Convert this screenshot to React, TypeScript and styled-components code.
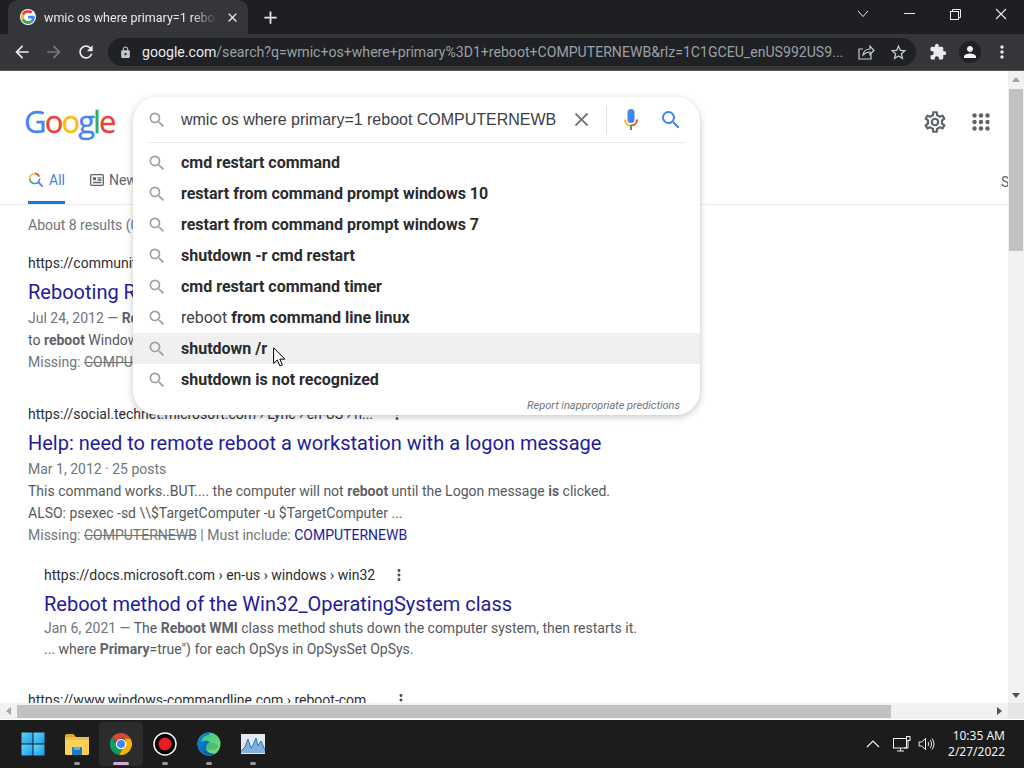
import React from "react";
import styled, { createGlobalStyle } from "styled-components";
import {
  MdArrowBack,
  MdArrowForward,
  MdRefresh,
  MdLock,
  MdStarBorder,
  MdExtension,
  MdPerson,
  MdMoreVert,
  MdSearch,
  MdClose,
  MdAdd,
  MdOutlineSettings,
} from "react-icons/md";

const GlobalStyle = createGlobalStyle`
  html, body { margin: 0; padding: 0; height: 100%; overflow: hidden; background: #fff; }
  #root { width: 1024px; height: 768px; }
  * { box-sizing: border-box; }
`;

const Screen = styled.div`
  width: 1024px;
  height: 768px;
  display: flex;
  flex-direction: column;
  font-family: Roboto, "Liberation Sans", Arial, sans-serif;
  overflow: hidden;
`;

/* browser chrome */
const TitleBar = styled.div`
  height: 34px;
  flex: none;
  background: #1e1f22;
  display: flex;
  align-items: flex-end;
  padding-left: 8px;
`;

const Tab = styled.div`
  width: 240px;
  height: 34px;
  background: #35363a;
  border-radius: 10px 10px 0 0;
  display: flex;
  align-items: center;
  padding: 0 8px 0 12px;
  gap: 8px;
  color: #e8eaed;
  font-size: 12.5px;
`;

const FaviconWrap = styled.div`
  width: 16px;
  height: 16px;
  border-radius: 50%;
  background: #fff;
  display: flex;
  align-items: center;
  justify-content: center;
  flex: none;
`;

const TabTitle = styled.div`
  flex: 1;
  white-space: nowrap;
  overflow: hidden;
  -webkit-mask-image: linear-gradient(to right, #000 85%, transparent 100%);
  mask-image: linear-gradient(to right, #000 85%, transparent 100%);
`;

const NewTab = styled.div`
  width: 44px;
  height: 34px;
  display: flex;
  align-items: center;
  justify-content: center;
  color: #e8eaed;
  font-size: 21px;
`;

const TitleSpacer = styled.div`
  flex: 1;
`;

const WindowButton = styled.div`
  width: 46px;
  height: 34px;
  display: flex;
  align-items: center;
  justify-content: center;
  padding-bottom: 6px;
  color: #e8eaed;
`;

const ToolBar = styled.div`
  height: 37px;
  flex: none;
  background: #35363a;
  border-bottom: 1px solid #55565a;
  display: flex;
  align-items: center;
  padding: 0 0 0 6px;
  color: #e8eaed;
`;

const NavButton = styled.div<{ $dim?: boolean }>`
  width: 32px;
  height: 32px;
  display: flex;
  align-items: center;
  justify-content: center;
  font-size: 20px;
  color: ${({ $dim }) => ($dim ? "#77787b" : "#e8eaed")};
`;

const Omnibox = styled.div`
  width: 808px;
  height: 28px;
  margin: 0 6px;
  border-radius: 14px;
  background: #202124;
  display: flex;
  align-items: center;
  padding: 0 2px 0 11px;
  font-size: 14.1px;
  color: #9aa0a6;
`;

const UrlText = styled.div`
  flex: 1;
  margin-left: 10px;
  white-space: nowrap;
  overflow: hidden;
`;

const UrlHost = styled.span`
  color: #e8eaed;
`;

const OmniIcon = styled.div`
  width: 32px;
  flex: none;
  display: flex;
  align-items: center;
  justify-content: center;
  font-size: 18px;
  color: #c8cbcf;
`;

const ProfileBadge = styled.div`
  width: 22px;
  height: 22px;
  border-radius: 50%;
  background: #202124;
  display: flex;
  align-items: center;
  justify-content: center;
  font-size: 18px;
  color: #f1f3f4;
`;

/* page */
const Frame = styled.div`
  flex: 1;
  min-height: 0;
  display: grid;
  grid-template-columns: 1fr 16px;
  grid-template-rows: 1fr 16px;
  background: #fff;
`;

const Viewport = styled.div`
  position: relative;
  overflow: hidden;
  background: #fff;
`;

const Header = styled.div`
  height: 134px;
  border-bottom: 1px solid #ebebeb;
  display: flex;
  flex-direction: column;
  padding-left: 24px;
`;

const HeaderTop = styled.div`
  height: 92px;
  display: flex;
  align-items: center;
  padding-top: 10px;
`;

const Logo = styled.div`
  font-family: "Open Sans", Roboto, sans-serif;
  font-size: 31px;
  letter-spacing: -1.9px;
  font-weight: 500;
  width: 96px;
  line-height: 1;
  -webkit-text-stroke: 0.3px currentColor;
  padding-bottom: 2px;
`;

const LogoLetter = styled.span<{ $c: string }>`
  color: ${({ $c }) => $c};
`;

const HeaderActions = styled.div`
  margin-left: auto;
  margin-right: 14px;
  display: flex;
  align-items: center;
  gap: 20px;
  color: #5f6368;
  font-size: 26px;
`;

const HeaderIcon = styled.div`
  width: 26px;
  height: 26px;
  display: flex;
  align-items: center;
  justify-content: center;
`;

const Tabs = styled.div`
  flex: 1;
  display: flex;
  padding-left: 4px;
  position: relative;
`;

const SearchTab = styled.div<{ $active?: boolean }>`
  height: 100%;
  margin-right: 25px;
  display: flex;
  align-items: center;
  gap: 5px;
  font-size: 14px;
  padding-bottom: 4px;
  color: ${({ $active }) => ($active ? "#4a80e0" : "#5f6368")};
  border-bottom: 3px solid ${({ $active }) => ($active ? "#1a73e8" : "transparent")};
`;

const ClippedTab = styled.div`
  margin-left: auto;
  margin-right: -1px;
  width: 8px;
  overflow: hidden;
  display: flex;
  align-items: center;
  font-size: 14px;
  padding-bottom: 4px;
  color: #5f6368;
`;

const Results = styled.div`
  padding-left: 28px;
`;

const AboutLine = styled.div`
  height: 22px;
  margin-top: 9px;
  margin-bottom: 16px;
  line-height: 22px;
  font-size: 14px;
  color: #70757a;
`;

const Result = styled.div<{ $indent?: boolean; $gap?: number }>`
  margin-left: ${({ $indent }) => ($indent ? 16 : 0)}px;
  margin-bottom: ${({ $gap }) => $gap ?? 30}px;
`;

const UrlRow = styled.div`
  height: 22px;
  display: flex;
  align-items: center;
  font-size: 14px;
  color: #2b2d30;
  white-space: nowrap;
`;

const Kebab = styled.div`
  margin-left: 15px;
  display: flex;
  font-size: 18px;
  color: #4d5156;
`;

const ResultTitle = styled.div<{ $tight?: boolean }>`
  height: ${({ $tight }) => ($tight ? 29 : 30)}px;
  margin-top: 3px;
  line-height: 30px;
  font-size: 20px;
  color: #231a9c;
  white-space: nowrap;
`;

const Snippet = styled.div<{ $tight?: boolean }>`
  height: ${({ $tight }) => ($tight ? 21 : 22)}px;
  line-height: ${({ $tight }) => ($tight ? 21 : 22)}px;
  font-size: 14px;
  color: #55595e;
  white-space: nowrap;
`;

const DateText = styled.span`
  color: #70757a;
`;

const Em = styled.b`
  font-weight: 700;
  color: #5f6368;
`;

const Struck = styled.s`
  color: #70757a;
`;

const Linked = styled.span`
  color: #231a9c;
`;

/* suggestions overlay */
const Suggest = styled.div`
  position: absolute;
  left: 133px;
  top: 26px;
  width: 567px;
  height: 318px;
  background: #fff;
  border-radius: 24px;
  box-shadow: 0 2px 7px rgba(60, 64, 67, 0.3);
  overflow: hidden;
  display: flex;
  flex-direction: column;
`;

const InputRow = styled.div`
  height: 46px;
  margin: 0 14px;
  flex: none;
  border-bottom: 1px solid #e8eaed;
  display: flex;
  align-items: center;
  font-size: 16px;
  color: #3c4043;
`;

const SearchGlyph = styled.div`
  width: 34px;
  flex: none;
  display: flex;
  font-size: 20px;
  color: #9aa0a6;
`;

const InputText = styled.div`
  flex: 1;
  white-space: nowrap;
  font-family: "Liberation Sans", Arial, sans-serif;
  letter-spacing: -0.01px;
`;

const ClearIcon = styled.div`
  display: flex;
  font-size: 23px;
  color: #70757a;
  padding-right: 13px;
  border-right: 1px solid #dfe1e5;
  height: 28px;
  align-items: center;
`;

const MicWrap = styled.div`
  display: flex;
  margin: 0 20px 0 16px;
`;

const BlueSearch = styled.div`
  display: flex;
  font-size: 24px;
  color: #4285f4;
  margin-right: 3px;
`;

const SuggestList = styled.div`
  margin-top: 4px;
  display: flex;
  flex-direction: column;
`;

const SuggestRow = styled.div<{ $hover?: boolean }>`
  height: 31px;
  padding-left: 14px;
  display: flex;
  align-items: center;
  font-size: 16px;
  font-weight: 700;
  color: #2a2b2e;
  background: ${({ $hover }) => ($hover ? "#f0f0f0" : "transparent")};
  white-space: nowrap;
`;

const Plain = styled.span`
  font-weight: 400;
  color: #3c4043;
  margin-right: 4px;
`;

const ReportLink = styled.div`
  flex: 1;
  display: flex;
  align-items: center;
  justify-content: flex-end;
  padding-right: 20px;
  font-size: 11px;
  font-style: italic;
  color: #70757a;
`;

const Pointer = styled.svg`
  position: absolute;
  left: 273px;
  top: 276px;
`;

/* scrollbars */
const VTrack = styled.div`
  background: #f1f1f1;
  display: flex;
  flex-direction: column;
  align-items: center;
  justify-content: space-between;
  position: relative;
`;

const VThumb = styled.div`
  position: absolute;
  top: 18px;
  left: 1px;
  right: 1px;
  height: 162px;
  background: #c1c1c1;
`;

const ArrowUp = styled.div`
  margin-top: 6px;
  border: 4px solid transparent;
  border-top: 0;
  border-bottom: 5px solid #a3a3a3;
`;

const ArrowDown = styled.div`
  margin-bottom: 5px;
  border: 4px solid transparent;
  border-bottom: 0;
  border-top: 5px solid #505050;
`;

const HTrack = styled.div`
  background: #f1f1f1;
  display: flex;
  align-items: center;
  padding: 0 6px;
`;

const ArrowLeft = styled.div`
  border: 4px solid transparent;
  border-left: 0;
  border-right: 5px solid #a3a3a3;
`;

const HThumb = styled.div`
  width: 874px;
  height: 13px;
  margin-left: 6px;
  background: #c1c1c1;
`;

const ArrowRight = styled.div`
  margin-left: auto;
  border: 4px solid transparent;
  border-right: 0;
  border-left: 5px solid #505050;
`;

const Corner = styled.div`
  background: #e6e6e6;
`;

/* taskbar */
const TaskBar = styled.div`
  height: 48px;
  flex: none;
  margin-top: 1px;
  background: #1c1c1c;
  display: flex;
  align-items: center;
  padding-left: 11px;
  color: #fff;
`;

const TaskItem = styled.div<{ $active?: boolean }>`
  width: 44px;
  height: 44px;
  border-radius: 4px;
  position: relative;
  display: flex;
  align-items: center;
  justify-content: center;
  background: ${({ $active }) => ($active ? "#2c2c2c" : "transparent")};
`;

const RunDot = styled.div<{ $active?: boolean }>`
  position: absolute;
  bottom: 1px;
  left: 50%;
  transform: translateX(-50%);
  height: 3px;
  border-radius: 2px;
  width: ${({ $active }) => ($active ? 16 : 6)}px;
  background: ${({ $active }) => ($active ? "#d8a9dc" : "#9a9a9a")};
`;

const Tray = styled.div`
  margin-left: auto;
  display: flex;
  align-items: center;
`;

const TrayIcon = styled.div<{ $w: number }>`
  width: ${({ $w }) => $w}px;
  display: flex;
  justify-content: center;
`;

const Clock = styled.div`
  width: 83px;
  padding-right: 19px;
  margin-left: 4px;
  text-align: right;
  font-family: "Noto Sans", "Open Sans", sans-serif;
  font-size: 12px;
  line-height: 16px;
  color: #f2f2f2;
  white-space: nowrap;
`;

const GoogleG = () => (
  <svg width="14" height="14" viewBox="0 0 48 48">
    <path fill="#EA4335" d="M24 9.5c3.54 0 6.71 1.22 9.21 3.6l6.85-6.85C35.9 2.38 30.47 0 24 0 14.62 0 6.51 5.38 2.56 13.22l7.98 6.19C12.43 13.72 17.74 9.5 24 9.5z" />
    <path fill="#4285F4" d="M46.98 24.55c0-1.57-.15-3.09-.38-4.55H24v9.02h12.94c-.58 2.96-2.26 5.48-4.78 7.18l7.73 6c4.51-4.18 7.09-10.36 7.09-17.65z" />
    <path fill="#FBBC05" d="M10.53 28.59c-.48-1.45-.76-2.99-.76-4.59s.27-3.14.76-4.59l-7.98-6.19C.92 16.46 0 20.12 0 24c0 3.88.92 7.54 2.56 10.78l7.97-6.19z" />
    <path fill="#34A853" d="M24 48c6.48 0 11.93-2.13 15.89-5.81l-7.73-6c-2.15 1.45-4.92 2.3-8.16 2.3-6.26 0-11.57-4.22-13.47-9.91l-7.98 6.19C6.51 42.62 14.62 48 24 48z" />
  </svg>
);

const Mic = () => (
  <svg width="16" height="24" viewBox="0 0 16 24">
    <rect x="4.5" y="1" width="7" height="14" rx="3.5" fill="#4285f4" />
    <path d="M2 11.5c0 3.6 2.6 6 6 6" fill="none" stroke="#fbbc05" strokeWidth="2" />
    <path d="M14 11.5c0 3.6-2.6 6-6 6" fill="none" stroke="#ea4335" strokeWidth="2" />
    <rect x="7" y="17" width="2" height="5" fill="#34a853" />
  </svg>
);

const AllIcon = () => (
  <svg width="16" height="16" viewBox="0 0 16 16" fill="none" strokeWidth="1.5">
    <path d="M6.7 1.6a5 5 0 0 1 4.6 3" stroke="#ea4335" />
    <path d="M1.7 6.6a5 5 0 0 1 5-5" stroke="#fbbc05" />
    <path d="M6.7 11.6a5 5 0 0 1-5-5" stroke="#34a853" />
    <path d="M11.7 6.6a5 5 0 0 1-5 5" stroke="#4285f4" />
    <path d="M10.4 10.3l4.3 4.4" stroke="#4285f4" strokeWidth="1.8" />
  </svg>
);

const NewsIcon = () => (
  <svg width="14" height="12" viewBox="0 0 14 12" fill="none" stroke="#5f6368" strokeWidth="1.3">
    <rect x="0.7" y="0.7" width="12.6" height="10.6" rx="1" />
    <rect x="3" y="3.2" width="3" height="3" fill="#5f6368" stroke="none" />
    <path d="M7.5 3.8h4M7.5 6h4M3 8.5h8.5" />
  </svg>
);

const AppsDots = () => (
  <svg width="18" height="18" viewBox="0 0 18 18" fill="#5f6368">
    {[2.5, 9, 15.5].map((cy) =>
      [2.5, 9, 15.5].map((cx) => <circle key={`${cx}-${cy}`} cx={cx} cy={cy} r="2.2" />)
    )}
  </svg>
);

const WinLogo = () => (
  <svg width="24" height="24" viewBox="0 0 24 24">
    <defs>
      <linearGradient id="winG" x1="0" y1="0" x2="1" y2="1">
        <stop offset="0" stopColor="#5fd8f8" />
        <stop offset="1" stopColor="#1a9ae8" />
      </linearGradient>
    </defs>
    <rect x="0.5" y="0.5" width="11" height="11" fill="url(#winG)" />
    <rect x="12.5" y="0.5" width="11" height="11" fill="url(#winG)" />
    <rect x="0.5" y="12.5" width="11" height="11" fill="url(#winG)" />
    <rect x="12.5" y="12.5" width="11" height="11" fill="url(#winG)" />
  </svg>
);

const FolderIcon = () => (
  <svg width="26" height="24" viewBox="0 0 26 24">
    <path d="M1 3.5A1.5 1.5 0 0 1 2.5 2h7l2.5 3h-11z" fill="#d9a62e" />
    <rect x="1" y="5" width="24" height="18" rx="1.5" fill="#fbd25c" />
    <rect x="1" y="5" width="24" height="3" fill="#f4c043" />
    <rect x="8" y="15" width="10" height="8" rx="1" fill="#1b78c8" />
    <rect x="10" y="15" width="6" height="3" fill="#55b3ea" />
  </svg>
);

const ChromeIcon = () => (
  <svg width="24" height="24" viewBox="0 0 48 48">
    <path fill="#db4437" d="M24 2a22 22 0 0 1 19 11H24a11 11 0 0 0-10.3 7.2L6.6 9.8A22 22 0 0 1 24 2z" />
    <path fill="#0f9d58" d="M6.6 9.8l9.6 16.6a9.5 9.5 0 0 0 11.5 6.9L20.4 45.7A22 22 0 0 1 6.6 9.8z" />
    <path fill="#f4b400" d="M43 13a22 22 0 0 1-22.6 32.7L31 28a11 11 0 0 0-1-15z" />
    <circle cx="24" cy="24" r="10.5" fill="#fff" />
    <circle cx="24" cy="24" r="8" fill="#4285f4" />
  </svg>
);

const RecordIcon = () => (
  <svg width="24" height="24" viewBox="0 0 24 24">
    <circle cx="12" cy="12" r="11" fill="#000" stroke="#f5f5f5" strokeWidth="1.5" />
    <circle cx="12" cy="12" r="6.5" fill="#ed1c24" />
  </svg>
);

const EdgeIcon = () => (
  <svg width="24" height="24" viewBox="0 0 24 24">
    <defs>
      <linearGradient id="edgeA" x1="0" y1="0" x2="1" y2="1">
        <stop offset="0" stopColor="#2bc48a" />
        <stop offset="1" stopColor="#7ce07a" />
      </linearGradient>
      <linearGradient id="edgeB" x1="0" y1="0" x2="1" y2="1">
        <stop offset="0" stopColor="#0c8fd8" />
        <stop offset="1" stopColor="#0a4fa8" />
      </linearGradient>
    </defs>
    <circle cx="12" cy="12" r="11.5" fill="url(#edgeA)" />
    <path d="M12 .5C6 .5 .5 5.500 .5 12c0 6.500 5.200 11.500 11.500 11.500 2.500 0 4.800-.8 6.700-2.100-4 .9-9.700-.7-9.700-5.900 0-2.800 2-4.500 4-5 -1.500-2-5.500-2.500-9-.5C5 5 8.500 3 12 3z" fill="url(#edgeB)" />
    <ellipse cx="15" cy="14.500" rx="6" ry="3.500" fill="#1c1c1c" opacity="0.15" />
  </svg>
);

const MonitorApp = () => (
  <svg width="24" height="20" viewBox="0 0 24 20">
    <rect width="24" height="20" fill="#dfeaf3" />
    <path d="M0 17l4-4 3-8 3 9 2-3 3-7 2 8 3-5 4 9v3H0z" fill="#7fb2de" />
    <path d="M0 17l4-4 3-8 3 9 2-3 3-7 2 8 3-5 4 9" fill="none" stroke="#2f76b5" strokeWidth="1" />
  </svg>
);

const suggestions: { plain?: string; bold: string; hover?: boolean }[] = [
  { bold: "cmd restart command" },
  { bold: "restart from command prompt windows 10" },
  { bold: "restart from command prompt windows 7" },
  { bold: "shutdown -r cmd restart" },
  { bold: "cmd restart command timer" },
  { plain: "reboot", bold: "from command line linux" },
  { bold: "shutdown /r", hover: true },
  { bold: "shutdown is not recognized" },
];

export default function App() {
  return (
    <Screen>
      <GlobalStyle />
      <TitleBar>
        <Tab>
          <FaviconWrap>
            <GoogleG />
          </FaviconWrap>
          <TabTitle>wmic os where primary=1 reboot COMPUTERNEWB</TabTitle>
          <MdClose size={15} />
        </Tab>
        <NewTab>
          <MdAdd />
        </NewTab>
        <TitleSpacer />
        <WindowButton>
          <svg width="12" height="8" viewBox="0 0 12 8" fill="none" stroke="#e8eaed" strokeWidth="1">
            <path d="M1 1l5 5.500L11 1" />
          </svg>
        </WindowButton>
        <WindowButton>
          <svg width="11" height="2" viewBox="0 0 11 2">
            <rect width="11" height="1" fill="#e8eaed" />
          </svg>
        </WindowButton>
        <WindowButton>
          <svg width="11" height="11" viewBox="0 0 11 11" fill="none" stroke="#e8eaed" strokeWidth="1">
            <rect x="0.5" y="2.500" width="8" height="8" />
            <path d="M2.500 2.500V.5h8v8h-2" />
          </svg>
        </WindowButton>
        <WindowButton>
          <svg width="12" height="12" viewBox="0 0 12 12" fill="none" stroke="#e8eaed" strokeWidth="1.1">
            <path d="M1 1l10 10M11 1L1 11" />
          </svg>
        </WindowButton>
      </TitleBar>

      <ToolBar>
        <NavButton>
          <MdArrowBack />
        </NavButton>
        <NavButton $dim>
          <MdArrowForward />
        </NavButton>
        <NavButton>
          <MdRefresh />
        </NavButton>
        <Omnibox>
          <MdLock size={13} color="#c4c7ca" />
          <UrlText>
            <UrlHost>google.com</UrlHost>
            /search?q=wmic+os+where+primary%3D1+reboot+COMPUTERNEWB&rlz=1C1GCEU_enUS992US9...
          </UrlText>
          <OmniIcon>
            <svg width="17" height="16" viewBox="0 0 17 16" fill="none" stroke="#c8cbcf" strokeWidth="1.2">
              <path d="M13 9.500V15H1V5h4" />
              <path d="M5 11c.5-3.500 3-6 7-6V2l4 4.500-4 4V8c-3 0-5 1-7 3z" />
            </svg>
          </OmniIcon>
          <OmniIcon>
            <MdStarBorder size={19} />
          </OmniIcon>
        </Omnibox>
        <NavButton>
          <MdExtension size={18} />
        </NavButton>
        <NavButton>
          <ProfileBadge>
            <MdPerson />
          </ProfileBadge>
        </NavButton>
        <NavButton>
          <MdMoreVert />
        </NavButton>
      </ToolBar>

      <Frame>
        <Viewport>
          <Header>
            <HeaderTop>
              <Logo>
                <LogoLetter $c="#4285f4">G</LogoLetter>
                <LogoLetter $c="#ea4335">o</LogoLetter>
                <LogoLetter $c="#fbbc05">o</LogoLetter>
                <LogoLetter $c="#4285f4">g</LogoLetter>
                <LogoLetter $c="#34a853">l</LogoLetter>
                <LogoLetter $c="#ea4335">e</LogoLetter>
              </Logo>
              <HeaderActions>
                <HeaderIcon>
                  <MdOutlineSettings />
                </HeaderIcon>
                <HeaderIcon>
                  <AppsDots />
                </HeaderIcon>
              </HeaderActions>
            </HeaderTop>
            <Tabs>
              <SearchTab $active>
                <AllIcon />
                All
              </SearchTab>
              <SearchTab>
                <NewsIcon />
                News
              </SearchTab>
              <ClippedTab>S</ClippedTab>
            </Tabs>
          </Header>

          <Results>
            <AboutLine>About 8 results (0.42 seconds)</AboutLine>
            <Result>
              <UrlRow>https://community.spiceworks.com</UrlRow>
              <ResultTitle>Rebooting Remote Computer</ResultTitle>
              <Snippet>
                <DateText>Jul 24, 2012 — </DateText>
                <Em>Reboot</Em>
              </Snippet>
              <Snippet>
                to <Em>reboot</Em> Windows
              </Snippet>
              <Snippet>
                <DateText>
                  Missing: <Struck>COMPUTERNEWB</Struck>
                </DateText>
              </Snippet>
            </Result>
            <Result $gap={18}>
              <UrlRow>
                https://social.technet.microsoft.com › Lync › en-US › n...
                <Kebab>
                  <MdMoreVert />
                </Kebab>
              </UrlRow>
              <ResultTitle>Help: need to remote reboot a workstation with a logon message</ResultTitle>
              <Snippet>
                <DateText>Mar 1, 2012 · 25 posts</DateText>
              </Snippet>
              <Snippet>
                This command works..BUT.... the computer will not <Em>reboot</Em> until the Logon message <Em>is</Em> clicked.
              </Snippet>
              <Snippet>ALSO: psexec -sd \\$TargetComputer -u $TargetComputer ...</Snippet>
              <Snippet>
                <DateText>
                  Missing: <Struck>COMPUTERNEWB</Struck> | Must include: <Linked>COMPUTERNEWB</Linked>
                </DateText>
              </Snippet>
            </Result>
            <Result $indent $gap={29}>
              <UrlRow>
                https://docs.microsoft.com › en-us › windows › win32
                <Kebab>
                  <MdMoreVert />
                </Kebab>
              </UrlRow>
              <ResultTitle $tight>Reboot method of the Win32_OperatingSystem class</ResultTitle>
              <Snippet $tight>
                <DateText>Jan 6, 2021 — </DateText>The <Em>Reboot</Em> <Em>WMI</Em> class method shuts down the computer system, then restarts it.
              </Snippet>
              <Snippet $tight>
                ... where <Em>Primary</Em>=true") for each OpSys in OpSysSet OpSys.
              </Snippet>
            </Result>
            <Result>
              <UrlRow>
                https://www.windows-commandline.com › reboot-com...
                <Kebab>
                  <MdMoreVert />
                </Kebab>
              </UrlRow>
            </Result>
          </Results>

          <Suggest>
            <InputRow>
              <SearchGlyph>
                <MdSearch />
              </SearchGlyph>
              <InputText>wmic os where primary=1 reboot COMPUTERNEWB</InputText>
              <ClearIcon>
                <MdClose />
              </ClearIcon>
              <MicWrap>
                <Mic />
              </MicWrap>
              <BlueSearch>
                <MdSearch />
              </BlueSearch>
            </InputRow>
            <SuggestList>
              {suggestions.map((item) => (
                <SuggestRow key={item.bold} $hover={item.hover}>
                  <SearchGlyph>
                    <MdSearch />
                  </SearchGlyph>
                  {item.plain && <Plain>{item.plain}</Plain>}
                  {item.bold}
                </SuggestRow>
              ))}
            </SuggestList>
            <ReportLink>Report inappropriate predictions</ReportLink>
          </Suggest>

          <Pointer width="13" height="20" viewBox="0 0 13 20">
            <path d="M.6.8v15.6l3.700-3.400 2.600 6 2.500-1-2.600-5.900h5.100z" fill="#fff" stroke="#000" strokeWidth="1" />
          </Pointer>
        </Viewport>

        <VTrack>
          <ArrowUp />
          <VThumb />
          <ArrowDown />
        </VTrack>
        <HTrack>
          <ArrowLeft />
          <HThumb />
          <ArrowRight />
        </HTrack>
        <Corner />
      </Frame>

      <TaskBar>
        <TaskItem>
          <WinLogo />
        </TaskItem>
        <TaskItem>
          <FolderIcon />
          <RunDot />
        </TaskItem>
        <TaskItem $active>
          <ChromeIcon />
          <RunDot $active />
        </TaskItem>
        <TaskItem>
          <RecordIcon />
          <RunDot />
        </TaskItem>
        <TaskItem>
          <EdgeIcon />
          <RunDot />
        </TaskItem>
        <TaskItem>
          <MonitorApp />
          <RunDot />
        </TaskItem>
        <Tray>
          <TrayIcon $w={28}>
            <svg width="14" height="8" viewBox="0 0 14 8" fill="none" stroke="#f2f2f2" strokeWidth="1.2">
              <path d="M1 7l6-6 6 6" />
            </svg>
          </TrayIcon>
          <TrayIcon $w={30}>
            <svg width="18" height="16" viewBox="0 0 18 16" fill="none" stroke="#f2f2f2" strokeWidth="1">
              <rect x="0.5" y="2.500" width="13" height="9.500" />
              <path d="M4 15h7M7.500 12v3" />
              <rect x="13.500" y="0.500" width="3.500" height="4" fill="#1c1c1c" />
              <path d="M15 4.500V12H11" />
            </svg>
          </TrayIcon>
          <TrayIcon $w={20}>
            <svg width="18" height="14" viewBox="0 0 18 14" fill="none" stroke="#f2f2f2" strokeWidth="1">
              <path d="M1 5h2.500L7.500 1.500v11L3.500 9H1z" />
              <path d="M10 5a3 3 0 0 1 0 4M12 3a6 6 0 0 1 0 8M14 1.500a8.500 8.500 0 0 1 0 11" />
            </svg>
          </TrayIcon>
          <Clock>
            10:35 AM
            <br />
            2/27/2022
          </Clock>
        </Tray>
      </TaskBar>
    </Screen>
  );
}
